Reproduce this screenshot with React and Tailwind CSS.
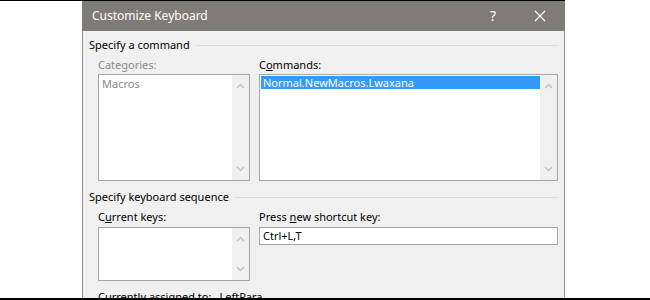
import React from 'react';

const font = { fontFamily: '"Noto Sans", "Open Sans", sans-serif' };

// small chevron for the disabled scrollbar arrows
const Chevron = ({ up }) => (
  <svg width="9" height="6" viewBox="0 0 9 6">
    <polyline
      points={up ? '1,5 4.5,1.5 8,5' : '1,1 4.5,4.5 8,1'}
      fill="none"
      stroke="#c2c2c2"
      strokeWidth="1.5"
    />
  </svg>
);

const Scrollbar = () => (
  <div className="w-[17px] h-full bg-[#f0f0f0] flex flex-col justify-between items-center py-[8px]">
    <Chevron up />
    <Chevron />
  </div>
);

const GroupHeader = ({ children }) => (
  <div className="flex items-center h-[16px] pl-[6px]">
    <span className="text-[11px] leading-[16px] text-black whitespace-nowrap">{children}</span>
    <div className="flex-1 ml-[6px] h-px bg-[#dcdcdc]" />
  </div>
);

const Label = ({ children, muted }) => (
  <div className={`text-[11px] leading-[16px] whitespace-nowrap ${muted ? 'text-[#8a8a8a]' : 'text-black'}`}>
    {children}
  </div>
);

export default function App() {
  return (
    <div className="w-[650px] h-[300px] bg-white overflow-hidden flex flex-col" style={font}>
      <div className="h-px w-[565px] bg-black" />
      <div className="flex-1 flex min-h-0">
        <div className="ml-[82px] w-[483px] flex flex-col">
          {/* title bar */}
          <div className="h-[30px] bg-[#7f7b77] flex items-center text-white shrink-0">
            <span className="ml-[10px] text-[12px] leading-[20px]">Customize Keyboard</span>
            <span className="ml-auto text-[14px] leading-[20px] mr-[38px]">?</span>
            <svg width="12" height="12" viewBox="0 0 12 12" className="mr-[19px]">
              <path d="M1 1 L11 11 M11 1 L1 11" stroke="white" strokeWidth="1.2" />
            </svg>
          </div>

          {/* body */}
          <div className="flex-1 min-h-0 overflow-hidden bg-[#f0f0f0] border-l border-r border-[#8e8e8e] pt-[6px] pr-[6px]">
            <GroupHeader>Specify a command</GroupHeader>
            <div className="flex gap-[9px] pl-[15px] mt-[4px]">
              <div className="w-[152px]">
                <Label muted>Categories:</Label>
                <div className="mt-[1px] h-[107px] border border-[#a6a6a6] bg-white flex">
                  <div className="flex-1 text-[11px] leading-[16px] text-[#8a8a8a] pl-[3px] pt-px">Macros</div>
                  <Scrollbar />
                </div>
              </div>
              <div className="flex-1">
                <Label>
                  C<span className="underline">o</span>mmands:
                </Label>
                <div className="mt-[1px] h-[107px] border border-[#a6a6a6] bg-white flex">
                  <div className="flex-1 pl-px pt-px">
                    <div className="bg-[#3399ff] text-white text-[11px] leading-[13px] h-[13px] pl-[2px]">
                      Normal.NewMacros.Lwaxana
                    </div>
                  </div>
                  <Scrollbar />
                </div>
              </div>
            </div>

            <div className="mt-[8px]">
              <GroupHeader>Specify keyboard sequence</GroupHeader>
            </div>
            <div className="flex gap-[9px] pl-[15px] mt-[4px]">
              <div className="w-[152px]">
                <Label>
                  C<span className="underline">u</span>rrent keys:
                </Label>
                <div className="mt-[2px] h-[54px] border border-[#a6a6a6] bg-white flex">
                  <div className="flex-1" />
                  <Scrollbar />
                </div>
              </div>
              <div className="flex-1">
                <Label>
                  Press <span className="underline">n</span>ew shortcut key:
                </Label>
                <div className="mt-[2px] h-[18px] border border-[#a6a6a6] bg-white text-[11px] leading-[16px] text-black pl-[3px]">
                  Ctrl+L,T
                </div>
              </div>
            </div>
            <div className="pl-[15px] mt-[8px] text-[11px] leading-[16px] text-black whitespace-nowrap">
              Currently assigned to:<span className="ml-[8px]">LeftPara</span>
            </div>
          </div>
        </div>
      </div>
      <div className="h-[2px] w-full bg-black shrink-0" />
    </div>
  );
}
